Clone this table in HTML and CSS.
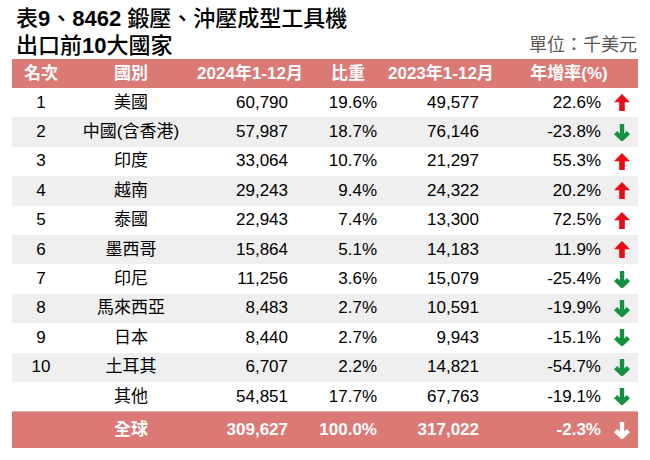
FILE: index.html
```html
<!DOCTYPE html>
<html lang="zh-Hant">
<head>
<meta charset="utf-8">
<title>表9 8462 鍛壓、沖壓成型工具機出口前10大國家</title>
<link rel="stylesheet" href="styles.css">
</head>
<body>
<div class="page">
  <div class="title">
    <div class="title-line">表<b>9</b>、<b>8462</b> 鍛壓、沖壓成型工具機</div>
    <div class="title-line second">
      <span>出口前<b>10</b>大國家</span>
      <span class="unit">單位：千美元</span>
    </div>
  </div>
  <div class="table">
    <div class="row head">
      <div class="c c1">名次</div>
      <div class="c c2">國別</div>
      <div class="c c3">2024年1-12月</div>
      <div class="c c4">比重</div>
      <div class="c c5">2023年1-12月</div>
      <div class="c c6">年增率(%)</div>
    </div>
    <div class="row">
      <div class="c c1">1</div><div class="c c2">美國</div><div class="c c3 r">60,790</div><div class="c c4 r">19.6%</div><div class="c c5 r">49,577</div>
      <div class="c c6 r">22.6%<svg class="arw up" viewBox="0 0 16 17"><polygon points="8,0 16,8.2 10.8,8.2 10.8,17 5.2,17 5.2,8.2 0,8.2"/></svg></div>
    </div>
    <div class="row alt">
      <div class="c c1">2</div><div class="c c2">中國(含香港)</div><div class="c c3 r">57,987</div><div class="c c4 r">18.7%</div><div class="c c5 r">76,146</div>
      <div class="c c6 r">-23.8%<svg class="arw down" viewBox="0 0 16 17"><path d="M8 0V14.6M1.6 8.6L8 14.8L14.4 8.6"/></svg></div>
    </div>
    <div class="row">
      <div class="c c1">3</div><div class="c c2">印度</div><div class="c c3 r">33,064</div><div class="c c4 r">10.7%</div><div class="c c5 r">21,297</div>
      <div class="c c6 r">55.3%<svg class="arw up" viewBox="0 0 16 17"><polygon points="8,0 16,8.2 10.8,8.2 10.8,17 5.2,17 5.2,8.2 0,8.2"/></svg></div>
    </div>
    <div class="row alt">
      <div class="c c1">4</div><div class="c c2">越南</div><div class="c c3 r">29,243</div><div class="c c4 r">9.4%</div><div class="c c5 r">24,322</div>
      <div class="c c6 r">20.2%<svg class="arw up" viewBox="0 0 16 17"><polygon points="8,0 16,8.2 10.8,8.2 10.8,17 5.2,17 5.2,8.2 0,8.2"/></svg></div>
    </div>
    <div class="row">
      <div class="c c1">5</div><div class="c c2">泰國</div><div class="c c3 r">22,943</div><div class="c c4 r">7.4%</div><div class="c c5 r">13,300</div>
      <div class="c c6 r">72.5%<svg class="arw up" viewBox="0 0 16 17"><polygon points="8,0 16,8.2 10.8,8.2 10.8,17 5.2,17 5.2,8.2 0,8.2"/></svg></div>
    </div>
    <div class="row alt">
      <div class="c c1">6</div><div class="c c2">墨西哥</div><div class="c c3 r">15,864</div><div class="c c4 r">5.1%</div><div class="c c5 r">14,183</div>
      <div class="c c6 r">11.9%<svg class="arw up" viewBox="0 0 16 17"><polygon points="8,0 16,8.2 10.8,8.2 10.8,17 5.2,17 5.2,8.2 0,8.2"/></svg></div>
    </div>
    <div class="row">
      <div class="c c1">7</div><div class="c c2">印尼</div><div class="c c3 r">11,256</div><div class="c c4 r">3.6%</div><div class="c c5 r">15,079</div>
      <div class="c c6 r">-25.4%<svg class="arw down" viewBox="0 0 16 17"><path d="M8 0V14.6M1.6 8.6L8 14.8L14.4 8.6"/></svg></div>
    </div>
    <div class="row alt">
      <div class="c c1">8</div><div class="c c2">馬來西亞</div><div class="c c3 r">8,483</div><div class="c c4 r">2.7%</div><div class="c c5 r">10,591</div>
      <div class="c c6 r">-19.9%<svg class="arw down" viewBox="0 0 16 17"><path d="M8 0V14.6M1.6 8.6L8 14.8L14.4 8.6"/></svg></div>
    </div>
    <div class="row">
      <div class="c c1">9</div><div class="c c2">日本</div><div class="c c3 r">8,440</div><div class="c c4 r">2.7%</div><div class="c c5 r">9,943</div>
      <div class="c c6 r">-15.1%<svg class="arw down" viewBox="0 0 16 17"><path d="M8 0V14.6M1.6 8.6L8 14.8L14.4 8.6"/></svg></div>
    </div>
    <div class="row alt">
      <div class="c c1">10</div><div class="c c2">土耳其</div><div class="c c3 r">6,707</div><div class="c c4 r">2.2%</div><div class="c c5 r">14,821</div>
      <div class="c c6 r">-54.7%<svg class="arw down" viewBox="0 0 16 17"><path d="M8 0V14.6M1.6 8.6L8 14.8L14.4 8.6"/></svg></div>
    </div>
    <div class="row">
      <div class="c c1"></div><div class="c c2">其他</div><div class="c c3 r">54,851</div><div class="c c4 r">17.7%</div><div class="c c5 r">67,763</div>
      <div class="c c6 r">-19.1%<svg class="arw down" viewBox="0 0 16 17"><path d="M8 0V14.6M1.6 8.6L8 14.8L14.4 8.6"/></svg></div>
    </div>
    <div class="row total">
      <div class="c c1"></div><div class="c c2">全球</div><div class="c c3 r">309,627</div><div class="c c4 r">100.0%</div><div class="c c5 r">317,022</div>
      <div class="c c6 r">-2.3%<svg class="arw down white" viewBox="0 0 16 17"><path d="M8 0V14.6M1.6 8.6L8 14.8L14.4 8.6"/></svg></div>
    </div>
  </div>
</div>
</body>
</html>
```

FILE: styles.css
```css
html, body {
  margin: 0;
  padding: 0;
  background: #ffffff;
}

body {
  font-family: "Liberation Sans", "Noto Sans CJK TC", sans-serif;
  color: #000000;
}

.page {
  width: 626px;
  padding: 5px 12px 0 12px;
}

.title {
  font-size: 22px;
  line-height: 27px;
  font-weight: 500;
  color: #000000;
  padding-left: 4px;
}

.title b {
  font-weight: 700;
}

.title-line.second {
  display: flex;
  justify-content: space-between;
  align-items: center;
}

.unit {
  font-size: 18px;
  font-weight: 400;
  color: #5a5a5a;
  margin-right: 1px;
}

.table {
  display: flex;
  flex-direction: column;
  font-size: 17px;
  line-height: 20px;
}

.row {
  display: grid;
  grid-template-columns: 58px 122px 116px 80px 104px 146px;
  height: 29.4px;
  align-items: center;
  background: #ffffff;
}

.row.alt {
  background: #efefef;
}

.row.head {
  height: 29px;
  background: #db7975;
  color: #ffffff;
  font-weight: 700;
}

.row.total {
  height: 37px;
  background: #db7975;
  color: #ffffff;
  font-weight: 700;
  border-top: 1px solid #e9a9a6;
  box-sizing: border-box;
}

.c {
  text-align: center;
  white-space: nowrap;
}

.c.r {
  text-align: right;
}

.c3.r {
  padding-right: 20px;
}

.c4.r {
  padding-right: 11px;
}

.c5.r {
  padding-right: 13px;
}

.head .c6 {
  padding-left: 8px;
}

.c6.r {
  display: flex;
  justify-content: flex-end;
  align-items: center;
  padding-right: 8px;
}

.arw {
  width: 16px;
  height: 17px;
  margin-left: 13px;
  flex: none;
}

.arw.up {
  fill: #ee0a14;
}

.arw.down {
  fill: none;
  stroke: #14913f;
  stroke-width: 4.4;
  stroke-linejoin: miter;
  stroke-linecap: butt;
}

.arw.down.white {
  stroke: #ffffff;
}
```
